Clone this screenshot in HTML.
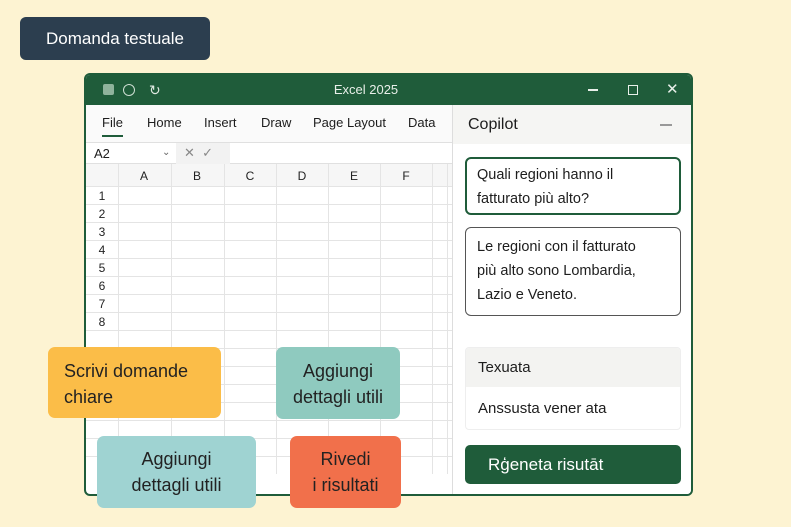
<!DOCTYPE html>
<html><head><meta charset="utf-8"><style>
*{box-sizing:border-box;margin:0;padding:0}
body{width:791px;height:527px;background:#fdf3d2;font-family:"Liberation Sans","DejaVu Sans",sans-serif;position:relative;overflow:hidden;color:#1d1d1d}
.abs{position:absolute}
.badge{left:20px;top:17px;width:190px;height:43px;background:#2c3e4f;border-radius:6px;color:#fff;font-size:17px;line-height:43px;text-align:center}
.win{left:84px;top:73px;width:609px;height:423px;background:#fff;border:2px solid #1f5c3a;border-radius:6px;overflow:hidden}
.title{left:0;top:0;width:100%;height:30px;background:#1f5c3a;color:#e8efe9;font-size:13px;line-height:30px}
.tab{top:40px;font-size:13px}
.side{left:366px;top:30px;width:243px;height:393px;background:#fff;border-left:1px solid #ddd}
.box{left:12px;width:216px;border-radius:6px;font-size:14.5px;line-height:24px;padding:5px 11px;white-space:nowrap}
.note{border-radius:7px;font-size:18px;line-height:26px;color:#222;white-space:nowrap}
</style></head><body>
<div class="abs badge">Domanda testuale</div>
<div class="abs win">
 <div class="abs title">
  <div class="abs" style="left:17px;top:9px;width:11px;height:11px;background:#8fb39c;border-radius:2px"></div>
  <div class="abs" style="left:37px;top:9px;width:12px;height:12px;border:1.5px solid #cfe0d4;border-radius:50%"></div>
  <div class="abs" style="left:63px;top:0;font-size:14px;color:#dfe9e1">↻</div>
  <div class="abs" style="left:0;width:560px;text-align:center">Excel 2025</div>
  <div class="abs" style="left:502px;top:14px;width:10px;height:1.5px;background:#e8efe9"></div>
  <div class="abs" style="left:542px;top:10px;width:10px;height:10px;border:1.5px solid #e8efe9"></div>
  <div class="abs" style="left:580px;top:0;font-size:15px">✕</div>
 </div>
 <div class="abs" style="left:0;top:30px;width:366px;height:37px;background:#fafafa"></div>
 <div class="abs tab" style="left:16px">File</div>
 <div class="abs" style="left:16px;top:60px;width:21px;height:2px;background:#1f5c3a"></div>
 <div class="abs tab" style="left:61px">Home</div>
 <div class="abs tab" style="left:118px">Insert</div>
 <div class="abs tab" style="left:175px">Draw</div>
 <div class="abs tab" style="left:227px">Page Layout</div>
 <div class="abs tab" style="left:322px">Data</div>
 <div class="abs" style="left:0;top:67px;width:366px;height:22px;border-top:1px solid #e0e0e0;border-bottom:1px solid #e0e0e0;background:#fff"></div>
 <div class="abs" style="left:8px;top:71px;font-size:13px">A2</div>
 <div class="abs" style="left:76px;top:72px;font-size:10px;color:#666">⌄</div>
 <div class="abs" style="left:90px;top:68px;width:54px;height:21px;background:#f2f2f2;color:#888;font-size:13px;padding:2px 8px">✕ &nbsp;✓</div>
 <div class="abs" style="left:0;top:89px;width:366px;height:22px;background:#f6f6f6"></div>
 <svg class="abs" style="left:0;top:89px" width="366" height="310">
  <g stroke="#e4e4e4" stroke-width="1">
   <line x1="32.5" y1="0" x2="32.5" y2="310"/><line x1="85.5" y1="0" x2="85.5" y2="310"/><line x1="138.5" y1="0" x2="138.5" y2="310"/><line x1="190.5" y1="0" x2="190.5" y2="310"/><line x1="242.5" y1="0" x2="242.5" y2="310"/><line x1="294.5" y1="0" x2="294.5" y2="310"/><line x1="346.5" y1="0" x2="346.5" y2="310"/><line x1="361.5" y1="0" x2="361.5" y2="310"/>
   <line x1="0" y1="22.5" x2="366" y2="22.5"/><line x1="0" y1="40.5" x2="366" y2="40.5"/><line x1="0" y1="58.5" x2="366" y2="58.5"/><line x1="0" y1="76.5" x2="366" y2="76.5"/><line x1="0" y1="94.5" x2="366" y2="94.5"/><line x1="0" y1="112.5" x2="366" y2="112.5"/><line x1="0" y1="130.5" x2="366" y2="130.5"/><line x1="0" y1="148.5" x2="366" y2="148.5"/><line x1="0" y1="166.5" x2="366" y2="166.5"/><line x1="0" y1="184.5" x2="366" y2="184.5"/><line x1="0" y1="202.5" x2="366" y2="202.5"/><line x1="0" y1="220.5" x2="366" y2="220.5"/><line x1="0" y1="238.5" x2="366" y2="238.5"/><line x1="0" y1="256.5" x2="366" y2="256.5"/><line x1="0" y1="274.5" x2="366" y2="274.5"/><line x1="0" y1="292.5" x2="366" y2="292.5"/>
  </g>
  <g font-family="Liberation Sans, sans-serif" font-size="12" fill="#222" text-anchor="middle">
   <text x="58" y="16">A</text><text x="111" y="16">B</text><text x="164" y="16">C</text><text x="216" y="16">D</text><text x="268" y="16">E</text><text x="320" y="16">F</text>
   <text x="16" y="36">1</text><text x="16" y="54">2</text><text x="16" y="72">3</text><text x="16" y="90">4</text><text x="16" y="108">5</text><text x="16" y="126">6</text><text x="16" y="144">7</text><text x="16" y="162">8</text>
  </g>
 </svg>
 <div class="abs side">
  <div class="abs" style="left:0;top:0;width:243px;height:39px;background:#f5f5f3;font-size:16px;line-height:39px;padding-left:15px">Copilot</div>
  <div class="abs" style="left:207px;top:19px;width:12px;height:1.5px;background:#999"></div>
  <div class="abs box" style="top:52px;height:58px;border:2px solid #1f5c3a;padding:4px 10px">Quali regioni hanno il<br>fatturato più alto?</div>
  <div class="abs box" style="top:122px;height:89px;border:1px solid #555;padding-top:7px">Le regioni con il fatturato<br>più alto sono Lombardia,<br>Lazio e Veneto.</div>
  <div class="abs" style="left:12px;top:242px;width:216px;height:83px;border:1px solid #eee;border-radius:4px;overflow:hidden">
   <div style="height:39px;background:#f3f3f1;font-size:15px;line-height:39px;padding-left:12px">Texuata</div>
   <div style="font-size:15px;line-height:44px;padding-left:12px">Anssusta vener ata</div>
  </div>
  <div class="abs" style="left:12px;top:340px;width:216px;height:39px;background:#1f5c3a;border-radius:5px;color:#fff;font-size:17px;line-height:39px;padding-left:23px">Rģeneta risutāt</div>
 </div>
</div>
<div class="abs note" style="left:48px;top:347px;width:173px;height:71px;background:#fbbd48;padding:11px 16px">Scrivi domande<br>chiare</div>
<div class="abs note" style="left:276px;top:347px;width:124px;height:72px;background:#8fcabf;text-align:center;padding-top:11px">Aggiungi<br>dettagli utili</div>
<div class="abs note" style="left:97px;top:436px;width:159px;height:72px;background:#9fd3d2;text-align:center;padding-top:10px">Aggiungi<br>dettagli utili</div>
<div class="abs note" style="left:290px;top:436px;width:111px;height:72px;background:#f1704b;text-align:center;padding-top:10px">Rivedi<br>i risultati</div>
</body></html>
